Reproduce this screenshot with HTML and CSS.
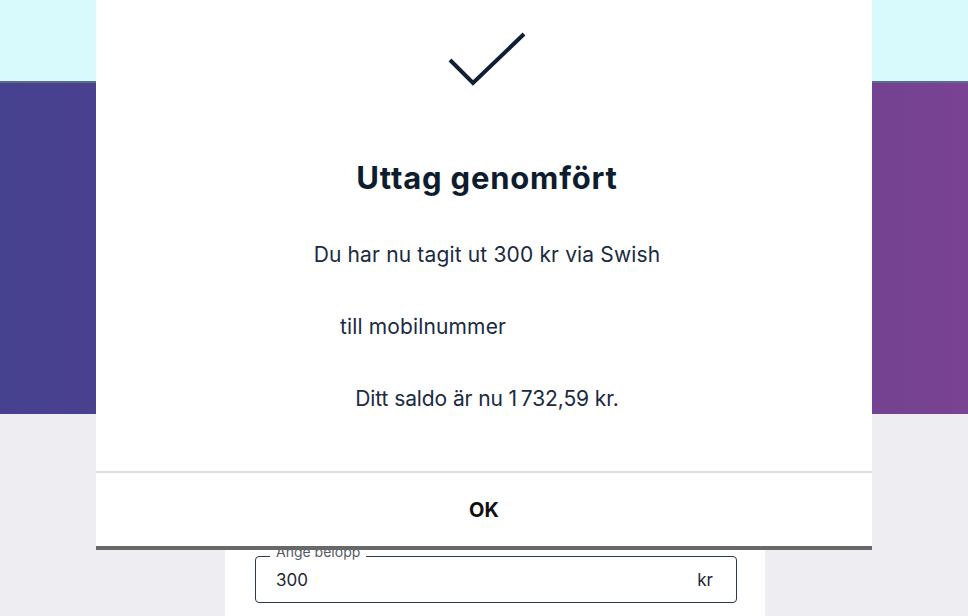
FILE: index.html
```html
<!DOCTYPE html>
<html lang="sv">
<head>
<meta charset="utf-8">
<title>Uttag genomfört</title>
<link rel="stylesheet" href="styles.css">
</head>
<body>
<header class="topbar"></header>
<section class="hero"></section>
<main class="content">
  <div class="card">
    <fieldset class="field">
      <legend class="field-label">Ange belopp</legend>
      <span class="field-value">300</span>
      <span class="field-unit">kr</span>
    </fieldset>
  </div>
</main>
<div class="modal" role="dialog">
  <div class="modal-body">
    <svg class="check" width="80" height="56" viewBox="0 0 80 56" aria-hidden="true">
      <path d="M3 30 L26 53 L77 4" fill="none" stroke="#0f1f35" stroke-width="4" stroke-linecap="butt" stroke-linejoin="miter"/>
    </svg>
    <h1 class="modal-title">Uttag genomfört</h1>
    <p class="modal-text">Du har nu tagit ut 300 kr via Swish</p>
    <p class="modal-text modal-text-shift">till mobilnummer</p>
    <p class="modal-text modal-text-tight">Ditt saldo är nu 1&#8239;732,59 kr.</p>
  </div>
  <div class="modal-footer">
    <button class="ok-btn">OK</button>
  </div>
</div>
</body>
</html>
```
FILE: styles.css
```css
html, body {
  margin: 0;
  padding: 0;
}
body {
  width: 968px;
  height: 616px;
  overflow: hidden;
  font-family: "Inter", "Liberation Sans", sans-serif;
  background: #ededf2;
  position: relative;
}
.topbar {
  height: 81px;
  background: #d8fafd;
}
.hero {
  height: 331px;
  border-top: 2px solid #5c6a8e;
  background: linear-gradient(90deg, #46418f 0%, #5a4190 50%, #7a4292 100%);
}
.content {
  height: 202px;
  display: flex;
}
.card {
  margin-left: 225px;
  width: 540px;
  background: #ffffff;
  padding-top: 135px;
  box-sizing: border-box;
}
.field {
  margin: 0 0 0 30px;
  width: 482px;
  height: 54px;
  box-sizing: border-box;
  border: 1.5px solid #2b3a4c;
  border-radius: 4px;
  padding: 0 23px 0 20px;
  display: flex;
  align-items: center;
  justify-content: space-between;
}
.field-label {
  font-size: 14px;
  color: #555b66;
  padding: 0 6px;
  margin-left: -6px;
  line-height: 14px;
  position: relative;
  top: -4px;
}
.field-value, .field-unit {
  font-size: 17px;
  color: #1d2633;
  position: relative;
  top: -3px;
}
.modal {
  position: absolute;
  left: 96px;
  top: 0;
  width: 776px;
  height: 550px;
  box-sizing: border-box;
  background: #ffffff;
  border-bottom: 4px solid #686868;
  display: flex;
  flex-direction: column;
}
.modal-body {
  display: flex;
  flex-direction: column;
  align-items: center;
  padding: 30px 0 0 6px;
  height: 473px;
  box-sizing: border-box;
  border-bottom: 2px solid #dedede;
  color: #15263b;
}
.check {
  display: block;
}
.modal-title {
  margin: 74px 0 0;
  font-size: 31px;
  line-height: 35px;
  font-weight: 700;
  color: #0e1c30;
  letter-spacing: 0.8px;
}
.modal-text {
  margin: 48px 0 0;
  font-size: 21px;
  line-height: 24px;
  color: #1a2a3f;
  letter-spacing: 0.15px;
}
.modal-text-shift {
  padding-right: 128px;
}
.modal-text-tight {
  letter-spacing: -0.1px;
}
.modal-footer {
  flex: 1;
  display: flex;
  align-items: center;
  justify-content: center;
}
.ok-btn {
  border: none;
  background: none;
  font-family: "Inter", "Liberation Sans", sans-serif;
  font-weight: 700;
  font-size: 20px;
  color: #111111;
  padding: 0;
}
```
